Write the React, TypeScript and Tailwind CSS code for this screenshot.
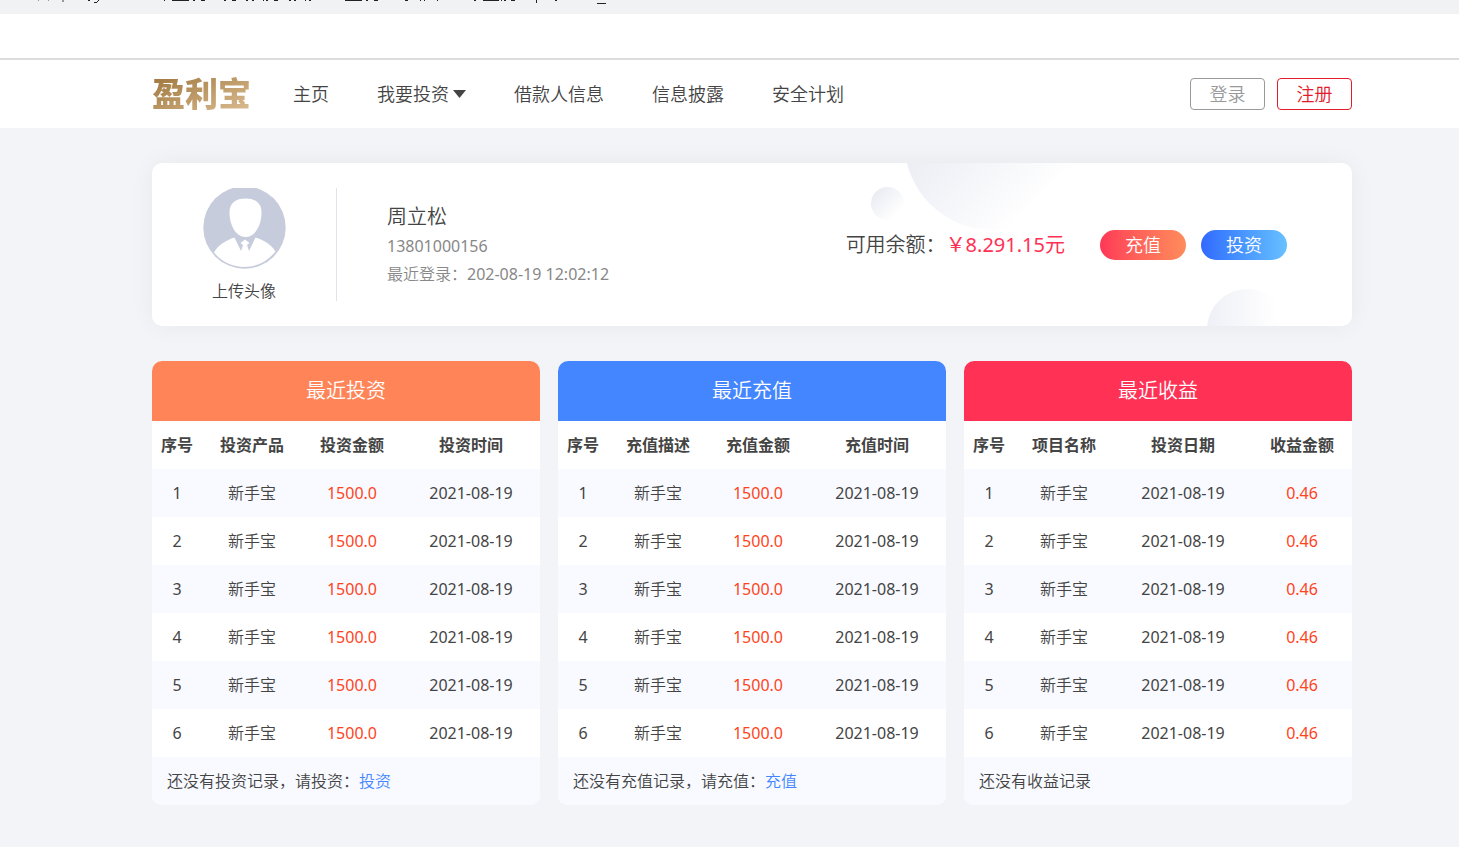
import React from 'react';

type Column = { label: string; width: string; cell?: string };

type Panel = {
  title: string;
  color: string;
  columns: Column[];
  row: string[];
  note: string;
  action?: string;
};

const NAV = ['主页', '我要投资', '借款人信息', '信息披露', '安全计划'];

const NUMBER = 'font-normal';
const MONEY = 'font-normal text-[#ff4422]';

const PANELS: Panel[] = [
  {
    title: '最近投资',
    color: 'bg-[#ff8559]',
    columns: [
      { label: '序号', width: 'w-[50px]', cell: NUMBER },
      { label: '投资产品', width: 'w-[100px]' },
      { label: '投资金额', width: 'w-[100px]', cell: MONEY },
      { label: '投资时间', width: 'w-auto', cell: NUMBER },
    ],
    row: ['新手宝', '1500.0', '2021-08-19'],
    note: '还没有投资记录，请投资：',
    action: '投资',
  },
  {
    title: '最近充值',
    color: 'bg-[#4486ff]',
    columns: [
      { label: '序号', width: 'w-[50px]', cell: NUMBER },
      { label: '充值描述', width: 'w-[100px]' },
      { label: '充值金额', width: 'w-[100px]', cell: MONEY },
      { label: '充值时间', width: 'w-auto', cell: NUMBER },
    ],
    row: ['新手宝', '1500.0', '2021-08-19'],
    note: '还没有充值记录，请充值：',
    action: '充值',
  },
  {
    title: '最近收益',
    color: 'bg-[#ff3155]',
    columns: [
      { label: '序号', width: 'w-[50px]', cell: NUMBER },
      { label: '项目名称', width: 'w-[100px]' },
      { label: '投资日期', width: 'w-auto', cell: NUMBER },
      { label: '收益金额', width: 'w-[100px]', cell: MONEY },
    ],
    row: ['新手宝', '2021-08-19', '0.46'],
    note: '还没有收益记录',
  },
];

// little marks along the top edge of the page: [x, y, width, height]
const MARKS = [
  [88, 0, 2, 1], [98, 0, 1, 1], [97, 1, 1, 1], [94, 2, 3, 1],
  [164, 0, 1, 1], [172, 0, 17, 1], [193, 0, 2, 1], [201, 0, 4, 1],
  [224, 0, 2, 1], [232, 0, 4, 1], [246, 0, 2, 1], [252, 0, 2, 1],
  [263, 0, 1, 1], [266, 0, 2, 1], [274, 0, 4, 1], [289, 0, 2, 1],
  [294, 0, 2, 1], [305, 0, 1, 1], [309, 0, 2, 1], [345, 0, 17, 1],
  [366, 0, 2, 1], [374, 0, 4, 1], [405, 0, 3, 1], [420, 0, 1, 1],
  [424, 0, 1, 1], [437, 0, 1, 1], [474, 0, 2, 1], [483, 0, 16, 1],
  [501, 0, 1, 1], [504, 0, 2, 1], [511, 0, 4, 1], [536, 0, 1, 3],
  [555, 0, 2, 1], [597, 3, 9, 1],
];

function TopStrip() {
  return (
    <div className="h-[14px] overflow-hidden bg-[#f1f2f4]">
      <svg width="620" height="5" viewBox="0 0 620 5" shapeRendering="crispEdges" aria-hidden="true">
        <path d="M38 0h1v1h-1zM48 0h1v1h-1zM62 0h2v2h-2z" fill="#999" />
        {MARKS.map(([x, y, w, h]) => (
          <rect key={x} x={x} y={y} width={w} height={h} fill="#222" />
        ))}
      </svg>
    </div>
  );
}

function Avatar() {
  return (
    <svg className="shrink-0" width="83" height="81" viewBox="0 0 83 81" aria-hidden="true">
      <circle cx="41.5" cy="39.5" r="41.2" fill="#c6ccdb" />
      <path d="M42.5 10.500c10 0 16 4.500 16 14 0 12-6 24.500-16 24.500s-16-12.500-16-24.500c0-9.500 6-14 16-14z" fill="#fff" />
      <path d="M31.500 49.500l6.500 13.500 2-6-2.500-2 4.500-3.500 4.500 3.500-2.500 2 2 6 6.500-13.500c8 2.500 16 7 20 14-8 10-18.500 15.500-31 15.500s-23-5.500-30.500-14.500c3.500-7 12.500-12.500 20.500-15z" fill="#fff" />
    </svg>
  );
}

function Header() {
  return (
    <header className="bg-white pr-[107px] pl-[152px]">
      <div className="flex h-[68px] items-center">
        <a href="#" className="bg-gradient-to-br from-[#9c7338] to-[#dfc297] bg-clip-text text-[33px] leading-[44px] font-black text-transparent">
          盈利宝
        </a>
        <nav className="ml-[42px] flex flex-1 gap-12 text-lg">
          {NAV.map((item) => (
            <a key={item} href="#" className="flex items-center gap-1">
              {item}
              {item === '我要投资' && (
                <svg width="13" height="8" viewBox="0 0 13 8" aria-hidden="true">
                  <path d="M0 0h13L6.500 8z" fill="#444" />
                </svg>
              )}
            </a>
          ))}
        </nav>
        <div className="flex gap-3 text-lg">
          <button className="h-8 w-[75px] rounded border border-[#999] text-[#999]">登录</button>
          <button className="h-8 w-[75px] rounded border border-[#e31c2b] text-[#e31c2b]">注册</button>
        </div>
      </div>
    </header>
  );
}

function UserCard() {
  return (
    <section className="relative rounded-[10px] bg-white shadow-[0_0_24px_rgba(0,0,0,0.05)]">
      {/* background bubbles */}
      <div className="absolute inset-0 overflow-hidden rounded-[10px]">
        <div className="absolute -top-[111px] right-[270px] h-[178px] w-[178px] rounded-full bg-gradient-to-br from-[#ebedf4] from-30% to-white to-80%" />
        <div className="absolute top-6 right-[448px] h-[33px] w-[33px] rounded-full bg-gradient-to-br from-[#e6e8f1] to-white to-80%" />
        <div className="absolute top-[126px] right-16 h-[81px] w-[81px] rounded-full bg-gradient-to-r from-[#eff0f6] to-white to-85%" />
      </div>
      <div className="relative flex items-center py-[25px] pr-[65px]">
        <div className="flex h-[113px] w-[185px] flex-col items-center border-r border-[#e1e3ea]">
          <Avatar />
          <button className="mt-3 text-base leading-5">上传头像</button>
        </div>
        <div className="ml-[50px] flex-1 text-base leading-7 text-[#888]">
          <h2 className="text-xl leading-[30px] font-[350] text-[#444]">周立松</h2>
          <p className="font-normal">13801000156</p>
          <p>最近登录：<span className="font-normal">202-08-19 12:02:12</span></p>
        </div>
        <p className="text-xl">
          可用余额：<span className="font-normal text-[#ff3155]">￥8.291.15元</span>
        </p>
        <div className="ml-[35px] flex gap-[15px] text-lg leading-[30px] text-white">
          <button className="w-[86px] rounded-full bg-gradient-to-r from-[#ff3657] to-[#ff8b5b]">充值</button>
          <button className="w-[86px] rounded-full bg-gradient-to-r from-[#3369ff] to-[#69c0ff]">投资</button>
        </div>
      </div>
    </section>
  );
}

function RecordPanel({ panel }: { panel: Panel }) {
  return (
    <section className="overflow-hidden rounded-[10px] bg-white">
      <h3 className={`text-center text-xl leading-[60px] font-[350] text-white ${panel.color}`}>{panel.title}</h3>
      <table className="w-full table-fixed text-center">
        <thead>
          <tr className="h-12">
            {panel.columns.map((col) => (
              <th key={col.label} className={`font-bold ${col.width}`}>{col.label}</th>
            ))}
          </tr>
        </thead>
        <tbody>
          {[1, 2, 3, 4, 5, 6].map((n) => (
            <tr key={n} className="h-12 odd:bg-[#f8faff]">
              {[String(n), ...panel.row].map((value, i) => (
                <td key={i} className={panel.columns[i].cell}>{value}</td>
              ))}
            </tr>
          ))}
        </tbody>
      </table>
      <p className="bg-[#f8faff] px-[15px] leading-[48px]">
        {panel.note}
        {panel.action && <a href="#" className="text-[#4486ff]">{panel.action}</a>}
      </p>
    </section>
  );
}

export default function App() {
  return (
    <div className="min-h-screen bg-[#f3f4f8] font-['Noto_Sans','Noto_Sans_CJK_SC',sans-serif] text-base font-[350] text-[#444]">
      <TopStrip />
      <div className="h-[46px] border-b-2 border-[#dcdcdc] bg-white" />
      <Header />
      <main className="pt-[35px] pr-[107px] pb-[42px] pl-[152px]">
        <UserCard />
        <div className="mt-[35px] grid grid-cols-3 gap-[18px]">
          {PANELS.map((panel) => (
            <RecordPanel key={panel.title} panel={panel} />
          ))}
        </div>
      </main>
    </div>
  );
}
